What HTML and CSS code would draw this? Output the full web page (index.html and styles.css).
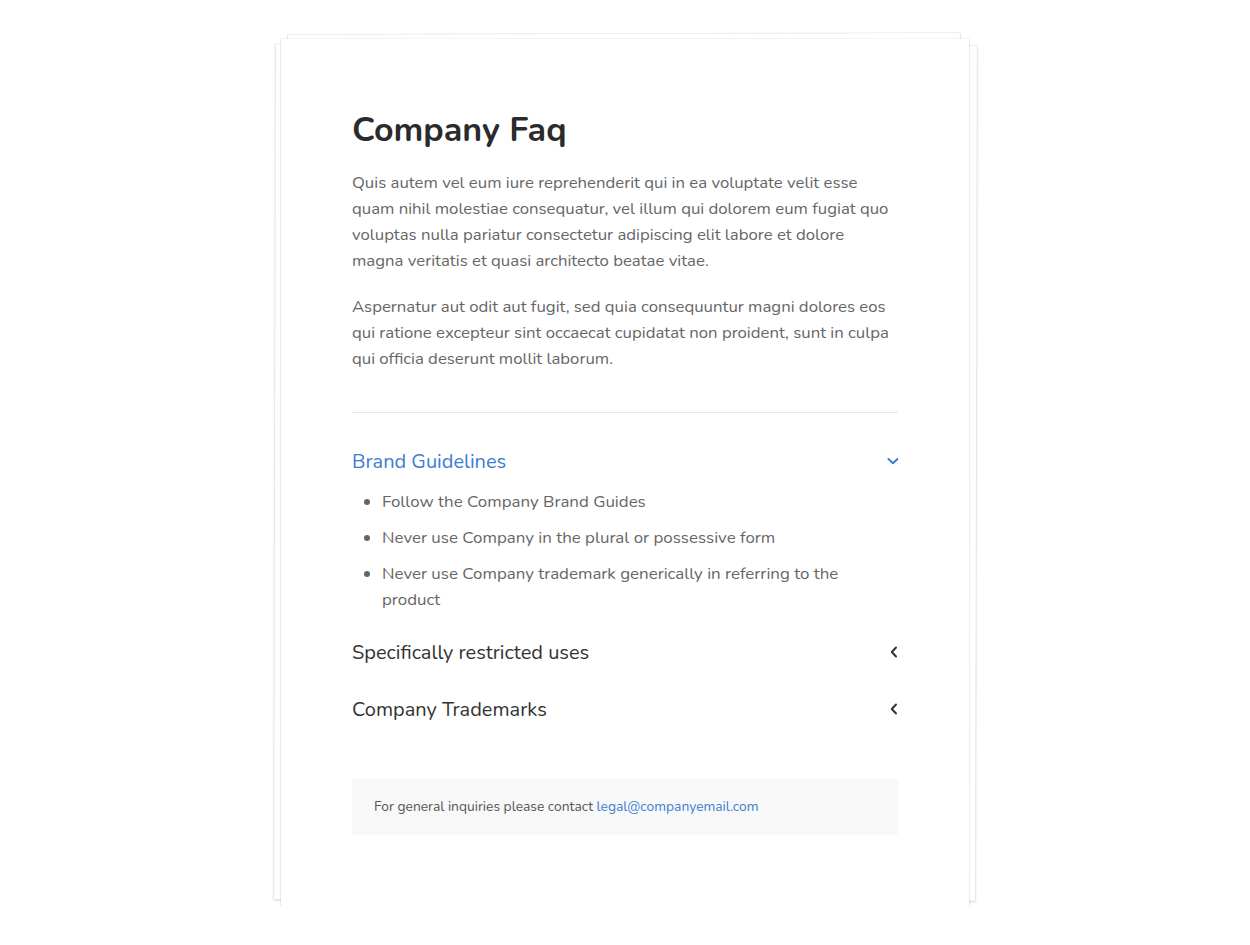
FILE: index.html
```html
<!DOCTYPE html>
<html lang="en">
<head>
<meta charset="utf-8">
<title>Company Faq</title>
<link rel="stylesheet" href="styles.css">
</head>
<body>
<main class="stack">
  <div class="sheet sheet-back-a"></div>
  <div class="sheet sheet-back-b"></div>
  <article class="card">
    <h1 class="title">Company Faq</h1>
    <p class="lead">Quis autem vel eum iure reprehenderit qui in ea voluptate velit esse quam nihil molestiae consequatur, vel illum qui dolorem eum fugiat quo voluptas nulla pariatur consectetur adipiscing elit labore et dolore magna veritatis et quasi architecto beatae vitae.</p>
    <p class="lead">Aspernatur aut odit aut fugit, sed quia consequuntur magni dolores eos qui ratione excepteur sint occaecat cupidatat non proident, sunt in culpa qui officia deserunt mollit laborum.</p>
    <hr class="divider">
    <section class="faq">
      <div class="faq-item open">
        <div class="faq-head">
          <span class="faq-title">Brand Guidelines</span>
          <svg class="chev" width="14" height="14" viewBox="0 0 14 14"><path d="M4.5 5 L9 9.2 L13.5 5" fill="none" stroke="currentColor" stroke-width="2" stroke-linecap="round" stroke-linejoin="round"/></svg>
        </div>
        <ul class="faq-list">
          <li>Follow the Company Brand Guides</li>
          <li>Never use Company in the plural or possessive form</li>
          <li>Never use Company trademark generically in referring to the product</li>
        </ul>
      </div>
      <div class="faq-item">
        <div class="faq-head">
          <span class="faq-title">Specifically restricted uses</span>
          <svg class="chev" width="10" height="14" viewBox="0 0 10 14"><path d="M8 2.5 L3.8 7 L8 11.5" fill="none" stroke="currentColor" stroke-width="2" stroke-linecap="round" stroke-linejoin="round"/></svg>
        </div>
      </div>
      <div class="faq-item">
        <div class="faq-head">
          <span class="faq-title">Company Trademarks</span>
          <svg class="chev" width="10" height="14" viewBox="0 0 10 14"><path d="M8 2.5 L3.8 7 L8 11.5" fill="none" stroke="currentColor" stroke-width="2" stroke-linecap="round" stroke-linejoin="round"/></svg>
        </div>
      </div>
    </section>
    <div class="contact">For general inquiries please contact <a href="#" class="mail">legal@companyemail.com</a></div>
  </article>
</main>
</body>
</html>
```

FILE: styles.css
```css
* { box-sizing: border-box; }
html, body { margin: 0; padding: 0; background: #ffffff; }
body {
  font-family: "Nunito", "Lato", "Open Sans", sans-serif;
  color: #666;
}
.stack {
  position: relative;
  width: 688px;
  margin: 39px auto 0;
}
.sheet {
  position: absolute;
  background: #fff;
  box-shadow: 0 0 0 1px rgba(0,0,0,0.05), 0 1px 3px rgba(0,0,0,0.14);
}
.sheet-back-a {
  left: 8px; right: 8px; top: -5px; bottom: -6px;
  transform: rotate(-0.15deg);
}
.sheet-back-b {
  left: -6px; right: -7px; top: 6px; bottom: 6px;
  transform: rotate(0.12deg);
}
.card {
  position: relative;
  background: #fff;
  padding: 68px 71px 71px;
  box-shadow: 0 0 0 1px rgba(0,0,0,0.04), 0 1px 2px rgba(0,0,0,0.1);
}
.title {
  margin: 0 0 17px;
  font-size: 34px;
  line-height: 46px;
  font-weight: 700;
  color: #2b2b2b;
}
.lead {
  margin: 0 0 20px;
  font-size: 16.75px;
  line-height: 26px;
  color: #666;
}
.divider {
  border: 0;
  border-top: 1px solid #e8e8e8;
  margin: 40px 0 35px;
}
.faq-head {
  display: flex;
  align-items: center;
  justify-content: space-between;
  height: 26px;
  color: #333;
}
.faq-title {
  font-size: 20px;
}
.faq-item + .faq-item { margin-top: 31px; }
.faq-item.open + .faq-item { margin-top: 26px; }
.faq-item.open .faq-head { color: #3d7dd0; }
.faq-list {
  margin: 15px 0 0;
  padding-left: 30px;
  font-size: 16.9px;
  line-height: 26px;
  color: #666;
}
.faq-list li { margin-bottom: 10px; }
.faq-list li:last-child { margin-bottom: 0; }
.contact {
  margin-top: 57px;
  background: #f8f8f8;
  border-radius: 3px;
  padding: 18px 22px;
  height: 56px;
  font-size: 13.8px;
  line-height: 20px;
  color: #555;
}
.mail { color: #3d7dd0; text-decoration: none; }
```
